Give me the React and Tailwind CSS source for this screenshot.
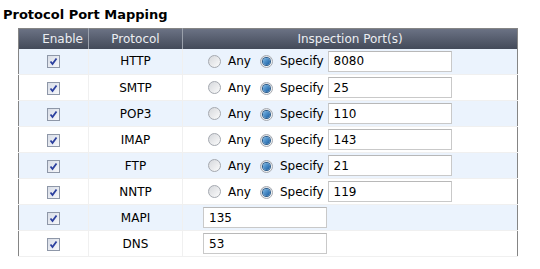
import React from 'react'

const rows = [
  { proto: 'HTTP', port: '8080', radio: true },
  { proto: 'SMTP', port: '25', radio: true },
  { proto: 'POP3', port: '110', radio: true },
  { proto: 'IMAP', port: '143', radio: true },
  { proto: 'FTP', port: '21', radio: true },
  { proto: 'NNTP', port: '119', radio: true },
  { proto: 'MAPI', port: '135', radio: false },
  { proto: 'DNS', port: '53', radio: false },
]

const FONT = { fontFamily: '"DejaVu Sans", Verdana, sans-serif' }

function CheckBox() {
  return (
    <span className="inline-block w-[13px] h-[13px] border border-[#8e97a8] bg-gradient-to-br from-[#d8dde7] to-[#f6f7fa] relative">
      <svg viewBox="0 0 11 11" className="absolute inset-0 w-[11px] h-[11px]">
        <path d="M2.5 5.5 L4.5 8 L8.5 2.5" fill="none" stroke="#2b3f9e" strokeWidth="1.8" />
      </svg>
    </span>
  )
}

function Radio({ checked }) {
  return (
    <span className="inline-flex items-center justify-center w-[13px] h-[13px] rounded-full border border-[#a5a9b0] bg-gradient-to-br from-[#d6d8dc] to-[#fbfbfb]">
      {checked && (
        <span className="w-[7px] h-[7px] rounded-full bg-gradient-to-br from-[#7ab9e8] to-[#0f5a9e] ring-1 ring-[#2a5b8a]" />
      )}
    </span>
  )
}

function PortInput({ value }) {
  return (
    <div className="w-[124px] h-[21px] border border-[#c9c9c9] border-t-[#b8b8b8] bg-white px-[5px] flex items-center text-[12px] text-black">
      {value}
    </div>
  )
}

export default function App() {
  return (
    <div className="w-[540px] h-[269px] bg-white pt-[6px]" style={FONT}>
      <div className="pl-[3px] text-[13px] font-bold text-black leading-[18px]">Protocol Port Mapping</div>
      <table className="ml-[18px] mt-[4px] w-[500px] border border-[#858585] border-collapse table-fixed">
        <colgroup>
          <col className="w-[70px]" />
          <col className="w-[94px]" />
          <col />
        </colgroup>
        <thead>
          <tr className="h-[20px] bg-gradient-to-b from-[#6b7284] to-[#434a59] text-[#eceef2] text-[12px]">
            <th className="font-normal text-right pr-[5px] border-r border-[#9aa0ab]">Enable</th>
            <th className="font-normal text-center border-r border-[#9aa0ab]">Protocol</th>
            <th className="font-normal text-center">Inspection Port(s)</th>
          </tr>
        </thead>
        <tbody>
          {rows.map((r, i) => (
            <tr key={r.proto} className={`h-[26px] text-[12px] text-black ${i % 2 === 0 ? 'bg-[#ebf3fd]' : 'bg-white'}`}>
              <td className="text-center border-r border-b border-[#f0f0f0] align-middle">
                <div className="flex justify-center pt-[1px]"><CheckBox /></div>
              </td>
              <td className="text-center border-r border-b border-[#f0f0f0]">{r.proto}</td>
              <td className="border-b border-[#f0f0f0]">
                {r.radio ? (
                  <div className="flex items-center pl-[25px]">
                    <Radio />
                    <span className="ml-[7px]">Any</span>
                    <span className="ml-[9px]"><Radio checked /></span>
                    <span className="ml-[7px] mr-[4px]">Specify</span>
                    <PortInput value={r.port} />
                  </div>
                ) : (
                  <div className="flex items-center pl-[20px]">
                    <PortInput value={r.port} />
                  </div>
                )}
              </td>
            </tr>
          ))}
        </tbody>
      </table>
    </div>
  )
}
